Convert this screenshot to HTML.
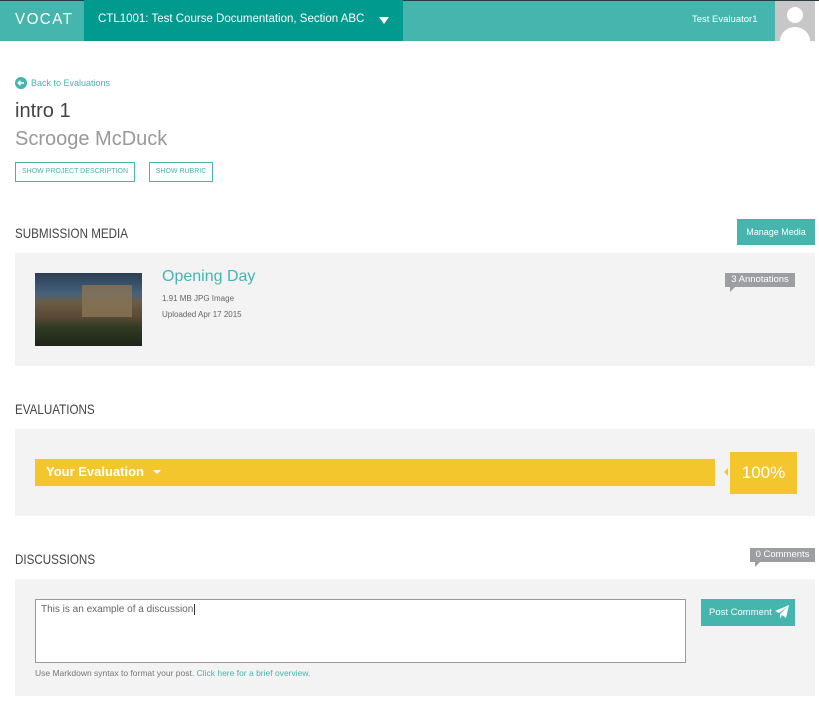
<!DOCTYPE html>
<html><head><meta charset="utf-8"><style>
*{box-sizing:border-box;margin:0;padding:0}
body{width:819px;height:701px;overflow:hidden;background:#fff;font-family:"Liberation Sans",sans-serif;color:#333;position:relative}
.abs{position:absolute}
.hdr{left:0;top:0;width:819px;height:41px;background:#45b5ae;border-top:1px solid #2d3b3f}
.course{left:84px;top:0;width:319px;height:41px;background:#009a8e}
.t{position:absolute;white-space:nowrap}
.panel{background:#f3f3f3;left:15px;width:800px}
.btn{position:absolute;border:1px solid #45b5ae;color:#45b5ae;font-size:7px;text-align:center;line-height:18px;height:20px}
.h2{font-size:14px;color:#444;transform:scaleX(0.83);transform-origin:left top}
.tag{position:absolute;background:#9d9ea2;color:#fff;font-size:9.5px;line-height:14px;text-align:center}
.tag:after{content:"";position:absolute;left:5px;bottom:-5px;border-right:5px solid transparent;border-top:5px solid #9d9ea2}
</style></head><body>
<div class="abs hdr"></div>
<div class="abs course"></div>
<div class="t" style="left:15px;top:11px;font-size:16px;color:#fff;letter-spacing:1.5px;transform:scaleX(0.95);transform-origin:left">VOCAT</div>
<div class="t" style="left:98px;top:13px;font-size:11.5px;color:#fff">CTL1001: Test Course Documentation, Section ABC</div>
<div class="abs" style="left:379px;top:17px;border-left:5px solid transparent;border-right:5px solid transparent;border-top:7px solid #fff"></div>
<div class="t" style="left:692px;top:14px;font-size:9.5px;color:#fff">Test Evaluator1</div>
<div class="abs" style="left:775px;top:1px;width:40px;height:40px;background:#c7c7c7;overflow:hidden">
<svg width="40" height="40"><circle cx="20" cy="14" r="8" fill="#fff"/><ellipse cx="20" cy="40" rx="15" ry="14" fill="#fff"/></svg></div>
<div class="abs" style="left:815px;top:1px;width:4px;height:40px;background:#fff"></div>

<svg class="abs" style="left:15px;top:77px" width="12" height="12"><circle cx="6" cy="6" r="6" fill="#45b5ae"/><path d="M9 6H3.5M5.5 3.8L3.3 6l2.2 2.2" stroke="#fff" stroke-width="1.5" fill="none"/></svg>
<div class="t" style="left:31px;top:78px;font-size:9px;color:#45b5ae">Back to Evaluations</div>
<div class="t" style="left:15px;top:100px;font-size:20px;color:#444">intro 1</div>
<div class="t" style="left:15px;top:128px;font-size:20px;color:#999">Scrooge McDuck</div>
<div class="btn" style="left:15px;top:162px;width:120px">SHOW PROJECT DESCRIPTION</div>
<div class="btn" style="left:149px;top:162px;width:64px">SHOW RUBRIC</div>

<div class="t h2" style="left:15px;top:225px">SUBMISSION MEDIA</div>
<div class="abs" style="left:737px;top:219px;width:78px;height:26px;background:#45b5ae;color:#fff;font-size:9px;line-height:26px;text-align:center">Manage Media</div>
<div class="abs panel" style="top:253px;height:113px"></div>
<div class="abs" style="left:35px;top:273px;width:107px;height:73px;background:linear-gradient(180deg,#2b3e55 0%,#46627c 28%,#6b5c45 40%,#5a4a36 60%,#2f3a22 75%,#1e2418 100%)"></div>
<div class="abs" style="left:82px;top:285px;width:50px;height:32px;background:#8a7455;opacity:.8"></div>
<div class="t" style="left:162px;top:268px;font-size:16px;color:#45b5ae">Opening Day</div>
<div class="t" style="left:162px;top:294px;font-size:8px;color:#666">1.91 MB JPG Image</div>
<div class="t" style="left:162px;top:310px;font-size:8px;color:#666">Uploaded Apr 17 2015</div>
<div class="tag" style="left:725px;top:273px;width:70px">3 Annotations</div>

<div class="t h2" style="left:15px;top:401px">EVALUATIONS</div>
<div class="abs panel" style="top:429px;height:87px"></div>
<div class="abs" style="left:35px;top:459px;width:680px;height:27px;background:#f4c62e"></div>
<div class="t" style="left:46px;top:464px;font-size:13px;color:#fff;font-weight:bold">Your Evaluation</div>
<div class="abs" style="left:153px;top:470px;border-left:4px solid transparent;border-right:4px solid transparent;border-top:4px solid #fff"></div>
<div class="abs" style="left:724px;top:468px;border-top:4px solid transparent;border-bottom:4px solid transparent;border-right:4px solid #f4c62e"></div>
<div class="abs" style="left:730px;top:452px;width:67px;height:42px;background:#f4c62e;color:#fff;font-size:17px;line-height:42px;text-align:center">100%</div>

<div class="t h2" style="left:15px;top:551px">DISCUSSIONS</div>
<div class="tag" style="left:750px;top:548px;width:65px">0 Comments</div>
<div class="abs panel" style="top:579px;height:117px"></div>
<div class="abs" style="left:35px;top:599px;width:651px;height:64px;background:#fff;border:1px solid #999"></div>
<div class="t" style="left:41px;top:604px;font-size:10px;color:#666">This is an example of a discussion<span style="border-left:1px solid #333;margin-left:1px"></span></div>
<div class="t" style="left:35px;top:668px;font-size:8.5px;color:#777">Use Markdown syntax to format your post. <span style="color:#45b5ae">Click here for a brief overview.</span></div>
<div class="abs" style="left:701px;top:599px;width:94px;height:27px;background:#45b5ae"></div>
<div class="t" style="left:709px;top:607px;font-size:9.5px;color:#fff">Post Comment</div>
<svg class="abs" style="left:775px;top:605px" width="14" height="14"><path d="M0 6L14 0L11 13L7 10L5 14V9L12 2L4 8Z" fill="#fff"/></svg>
</body></html>
